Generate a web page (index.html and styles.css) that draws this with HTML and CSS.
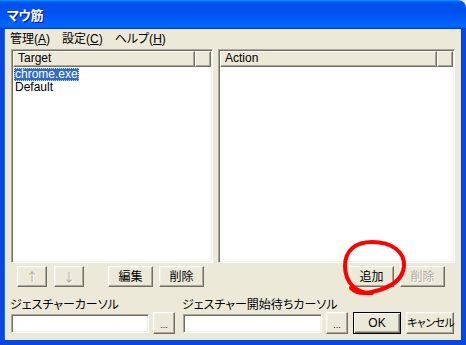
FILE: index.html
```html
<!DOCTYPE html>
<html lang="ja">
<head>
  <meta charset="UTF-8">
  <title>マウ筋</title>
  <link rel="stylesheet" href="styles.css">
</head>
<body>
  <div class="window">
    <div class="titlebar"><span class="title">マウ筋</span></div>
    <div class="frame">
      <div class="menubar">
        <span class="menu-item">管理(<u>A</u>)</span>
        <span class="menu-item">設定(<u>C</u>)</span>
        <span class="menu-item">ヘルプ(<u>H</u>)</span>
      </div>

      <div class="panes">
        <div class="pane">
          <div class="listview">
            <div class="lv-header">
              <div class="lv-col lv-col-target">Target</div>
              <div class="lv-col lv-col-fill"></div>
            </div>
            <div class="lv-body">
              <div class="lv-item"><span class="lv-text selected">chrome.exe</span></div>
              <div class="lv-item"><span class="lv-text">Default</span></div>
            </div>
          </div>
          <div class="button-row">
            <button class="btn btn-arrow" disabled>↑</button>
            <button class="btn btn-arrow btn-down" disabled>↓</button>
            <button class="btn btn-mid btn-edit">編集</button>
            <button class="btn btn-mid">削除</button>
          </div>
        </div>

        <div class="pane">
          <div class="listview">
            <div class="lv-header">
              <div class="lv-col lv-col-action">Action</div>
              <div class="lv-col lv-col-fill"></div>
            </div>
            <div class="lv-body"></div>
          </div>
          <div class="button-row button-row-right">
            <button class="btn btn-mid">追加</button>
            <button class="btn btn-mid" disabled>削除</button>
          </div>
        </div>
      </div>

      <div class="footer">
        <div class="field">
          <div class="field-label">ジェスチャーカーソル</div>
          <div class="field-row">
            <div class="textbox textbox-1"></div>
            <button class="btn btn-browse">...</button>
          </div>
        </div>
        <div class="field field-2">
          <div class="field-label">ジェスチャー開始待ちカーソル</div>
          <div class="field-row">
            <div class="textbox textbox-2"></div>
            <button class="btn btn-browse">...</button>
            <button class="btn btn-dialog btn-default">OK</button>
            <button class="btn btn-dialog btn-cancel">キャンセル</button>
          </div>
        </div>
      </div>
    </div>

    <!-- hand drawn red mark around the add button -->
    <svg class="annotation" viewBox="0 0 466 345" width="466" height="345">
      <path d="M 372 293 C 356 294, 345 282, 345 266 C 345 250, 356 242, 372 242 C 392 242, 405 252, 404 266 C 403 280, 390 288, 372 292 C 364 294, 356 293, 351 288"
            fill="none" stroke="#ff0000" stroke-width="4" stroke-linecap="round"/>
    </svg>
  </div>
</body>
</html>
```

FILE: styles.css
```css
body {
  margin: 0;
  background: #ece9d8;
  font-family: "Liberation Sans", "Noto Sans CJK JP", sans-serif;
  font-size: 12px;
  font-feature-settings: "palt";
  color: #000;
}

.window {
  position: relative;
  width: 466px;
  height: 345px;
  display: flex;
  flex-direction: column;
  overflow: hidden;
}

.titlebar {
  height: 29px;
  flex: none;
  display: flex;
  align-items: center;
  padding-left: 7px;
  border-radius: 0 8px 0 0;
  background: linear-gradient(180deg, #0997ff, #0053ee 8%, #0050ee 40%, #06f 88%, #06f 93%, #005bff 95%, #003dd7 96%, #003dd7);
}

.title {
  color: #fff;
  font-family: "Noto Sans CJK JP", sans-serif;
  font-weight: bold;
  font-size: 13px;
  line-height: 14px;
  letter-spacing: -0.5px;
  text-shadow: 1px 1px #0f1089;
}

.frame {
  flex: 1;
  display: flex;
  flex-direction: column;
  background: #ece9d8;
  border-style: solid;
  border-color: #0848dc;
  border-width: 0 4px 5px 4px;
  box-shadow: inset 1px 0 #166aee, inset -1px 0 #003bda;
}

.menubar {
  height: 19px;
  display: flex;
  align-items: center;
  flex: none;
}

.menu-item {
  padding: 0 6px;
  line-height: 14px;
}

.menu-item u {
  text-decoration-thickness: 1px;
}

.panes {
  margin-top: 1px;
  padding: 0 7px;
  display: grid;
  grid-template-columns: 202px 237px;
  column-gap: 5px;
}

.listview {
  height: 214px;
  box-sizing: border-box;
  background: #fff;
  border: 1px solid;
  border-color: #aca899 #fff #fff #aca899;
  box-shadow: inset 1px 1px #716f64, inset -1px -1px #f1efe2;
  padding: 1px;
  display: flex;
  flex-direction: column;
}

.lv-header {
  display: flex;
  height: 16px;
  flex: none;
}

.lv-col {
  box-sizing: border-box;
  height: 16px;
  background: #ece9d8;
  border: 1px solid;
  border-color: #fff #716f64 #716f64 #fff;
  box-shadow: inset -1px -1px #aca899;
  padding-left: 4px;
  line-height: 13px;
}

.lv-col-target {
  width: 182px;
}

.lv-col-action {
  width: 217px;
}

.lv-col-fill {
  flex: 1;
}

.lv-body {
  flex: 1;
  padding-top: 1px;
}

.lv-item {
  height: 13px;
  line-height: 13px;
  padding-left: 1px;
}

.lv-text {
  display: inline-block;
  padding: 0 1px;
  height: 13px;
}

.lv-text.selected {
  background: #316ac5;
  color: #fff;
  outline: 1px dotted #c9d7ef;
  outline-offset: -1px;
}

.button-row {
  margin-top: 3px;
  display: flex;
  padding-left: 6px;
}

.button-row-right {
  justify-content: flex-end;
  padding-right: 10px;
  gap: 6px;
}

.btn {
  box-sizing: border-box;
  height: 21px;
  padding: 0;
  margin: 0;
  background: #ece9d8;
  font-family: "Liberation Sans", "Noto Sans CJK JP", sans-serif;
  font-size: 12px;
  font-feature-settings: "palt";
  color: #000;
  white-space: nowrap;
  border: 1px solid;
  border-color: #fff #716f64 #716f64 #fff;
  box-shadow: inset -1px -1px #aca899, inset 1px 1px #f1efe2;
  border-radius: 0;
  line-height: 14px;
}

.btn:disabled {
  color: #aca899;
  text-shadow: 1px 1px #fff;
}

.btn-arrow {
  width: 30px;
  font-family: "Noto Sans CJK JP", sans-serif;
}

.btn-down {
  margin-left: 7px;
}

.btn-mid {
  width: 45px;
}

.btn-edit {
  margin-left: 24px;
  margin-right: 6px;
}

.footer {
  margin-top: 9px;
  padding-left: 7px;
  display: flex;
}

.field-2 {
  margin-left: 8px;
}

.field-label {
  font-size: 12px;
  line-height: 16px;
  font-family: "Noto Sans CJK JP", sans-serif;
  margin-left: -1px;
  white-space: nowrap;
}

.field-row {
  display: flex;
  align-items: center;
  height: 22px;
}

.textbox {
  box-sizing: border-box;
  height: 19px;
  background: #fff;
  border: 1px solid;
  border-color: #aca899 #fff #fff #aca899;
  box-shadow: inset 1px 1px #716f64, inset -1px -1px #f1efe2;
}

.textbox-1 {
  width: 138px;
  margin-right: 4px;
}

.textbox-2 {
  width: 139px;
  margin-right: 4px;
}

.btn-browse {
  width: 22px;
  height: 22px;
  font-size: 9px;
  line-height: 12px;
  padding-top: 4px;
}

.btn-dialog {
  width: 48px;
  height: 22px;
  margin-left: 5px;
}

.btn-cancel {
  font-size: 11px;
  letter-spacing: -0.5px;
}

.btn-default {
  border-color: #000;
  box-shadow: inset 1px 1px #fff, inset -1px -1px #716f64, inset -2px -2px #aca899;
}

.annotation {
  position: absolute;
  top: 0;
  left: 0;
  pointer-events: none;
}
```
